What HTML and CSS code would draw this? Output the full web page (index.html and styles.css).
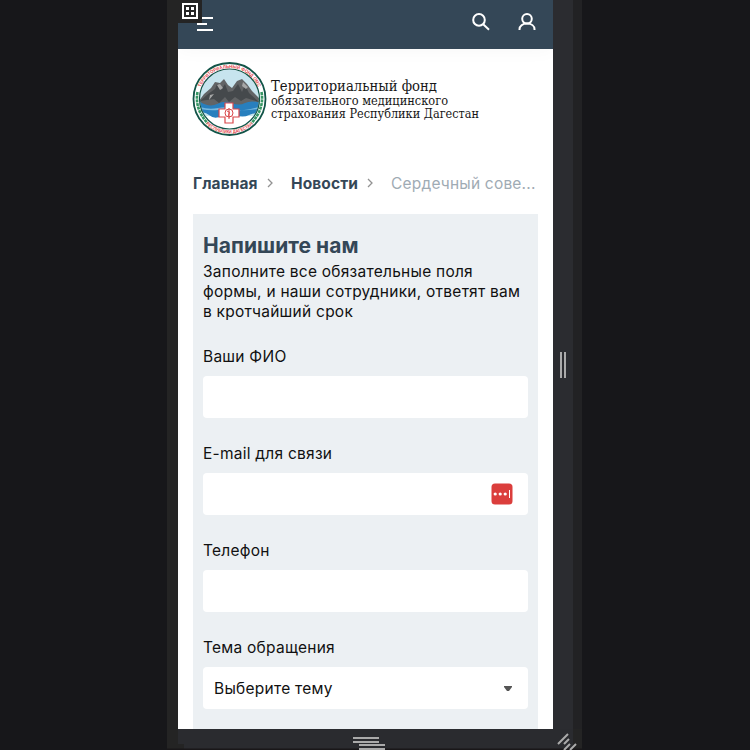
FILE: index.html
```
<!DOCTYPE html>
<html lang="ru">
<head>
<meta charset="utf-8">
<title>Напишите нам</title>
<link rel="stylesheet" href="styles.css">
</head>
<body>
<div class="workspace">
  <div class="rail-left"></div>
  <main class="device">
    <header class="topbar">
      <span class="burger"><i></i><i></i><i></i></span>
      <nav class="actions">
        <svg width="20" height="20" viewBox="0 0 20 20"><circle cx="8" cy="7.900" r="5.800"/><path d="M12.200 12.200 18 17.700"/></svg>
        <svg width="20" height="20" viewBox="0 0 20 20"><circle cx="10" cy="6.800" r="4.800"/><path d="M2.500 18v-.8c0-3.200 3-5.600 7.500-5.600s7.500 2.400 7.500 5.600v.8"/></svg>
      </nav>
    </header>
    <div class="brand">
      <svg width="290" height="78" viewBox="0 0 290 78">
        <defs>
          <clipPath id="scene"><circle cx="36.500" cy="38" r="29.500"/></clipPath>
          <path id="arcTop" d="M5.500 38a31 31 0 0 1 62 0"/>
          <path id="arcBottom" d="M2 38a34.500 34.500 0 0 0 69 0"/>
        </defs>
        <circle cx="36.500" cy="38" r="36" fill="#fff" stroke="#125448" stroke-width="1.800"/>
        <g clip-path="url(#scene)">
          <path fill="#c7e4ee" d="M5 5h64v66H5z"/>
          <path fill="#fff" d="M5 55h64v20H5z"/>
          <path fill="#287fbe" d="M5 40h64v13q-7-2-13 1t-14 0-14 1-12-1-11 0z"/>
          <path fill="#78b9df" d="M7 46q9 3 18 1t17 1 23-2v2q-13 2-23 1t-17 0-18-1z"/>
          <path fill="#626466" d="m6 40 5-7 7-6 4-6 5 1 4-4 4 6 4 3 5-7 5-2 5 5 5 7 9 9v3q-10-3-16 0t-13 0-15 1-18-3z"/>
          <path fill="#45494c" d="m7 40 8-7 7-5 2-5 4 6 4-6 3 8 5-1 5-7 4 8 3-7 4 8 10 9-13-4-5 3-6-4-6 5-4-5-6 6-5-4z"/>
          <path fill="#a6a7a7" d="m24 24 3-1 3 4-3 2zm26-3 5 5-2 2-4-3zM17 34l4-1-5 6z"/>
        </g>
        <circle cx="36.500" cy="38" r="30" fill="none" stroke="#125448" stroke-width="1.200"/>
        <g fill="none" stroke="#359663" stroke-width="2.600" stroke-dasharray="3 .7"><path d="M4.500 31q-3 17 10 31M68.500 31q3 17-10 31"/></g>
        <path fill="#fff" stroke="#d9474a" stroke-width="1.200" d="M32 42h8v6h6v8h-6v6h-8v-6h-6v-8h6z"/>
        <circle cx="36" cy="52" r="4" fill="#fff" stroke="#d9474a"/><path d="M36 47v11m-2-8q4 1 2 3t1 3" fill="none" stroke="#d9474a"/>
        <text class="seal"><textPath href="#arcTop" startOffset="12" textLength="73" lengthAdjust="spacingAndGlyphs">ТЕРРИТОРИАЛЬНЫЙ ФОНД ОМС</textPath></text>
        <text class="seal"><textPath href="#arcBottom" startOffset="28" textLength="52" lengthAdjust="spacingAndGlyphs">РЕСПУБЛИКИ ДАГЕСТАН</textPath></text>
        <g class="brand-name"><text x="78" y="30" font-size="14" textLength="166" lengthAdjust="spacingAndGlyphs">Территориальный фонд</text><text x="78" y="44" font-size="12" textLength="177" lengthAdjust="spacingAndGlyphs">обязательного медицинского</text><text x="78" y="57" font-size="12" textLength="208" lengthAdjust="spacingAndGlyphs">страхования Республики Дагестан</text></g>
      </svg>
    </div>
    <nav class="crumbs">
      <span class="crumb-home">Главная</span><svg width="6" height="10" viewBox="0 0 6 10"><path d="m1 1 4 4-4 4"/></svg>
      <span class="crumb-news">Новости</span><svg width="6" height="10" viewBox="0 0 6 10"><path d="m1 1 4 4-4 4"/></svg>
      <span class="crumb-current">Сердечный сове...</span>
    </nav>
    <form class="panel">
      <h1>Напишите нам</h1>
      <p>Заполните все обязательные поля<br>формы, и наши сотрудники, ответят вам<br>в кротчайший срок</p>
      <div class="field"><label>Ваши ФИО</label><div class="input"></div></div>
      <div class="field"><label>E-mail для связи</label><div class="input"><svg class="pass" width="22" height="22" viewBox="0 0 22 22"><rect x=".5" y=".5" width="21" height="21" rx="3.500" fill="#db3e3c"/><g fill="#fff"><circle cx="4.200" cy="11" r="1.600"/><circle cx="9.200" cy="11" r="1.600"/><circle cx="14.200" cy="11" r="1.600"/><path d="M18 7h1v8h-1z"/></g></svg></div></div>
      <div class="field"><label>Телефон</label><div class="input"></div></div>
      <div class="field"><label>Тема обращения</label><div class="input"><span class="choice">Выберите тему</span><svg width="8" height="5" viewBox="0 0 8 5"><path fill="#555" d="M0 0h8v1L5 5H3L0 1z"/></svg></div></div>
    </form>
  </main>
  <div class="rail-right"><span class="grip-side"></span></div>
  <div class="rail-edge"></div>
</div>
<div class="bottom-rail"><svg width="415" height="21" viewBox="0 0 415 21"><path fill="#242424" d="M0 0h11v15h6v6H0zM406 0h9v21h-9z"/><path fill="#191719" d="M0 19.500h415V21H0z"/><g fill="#aaa"><path d="M186 8h26v2h-26zM186 12h26v2h-26zM192 15h26v2h-26zM192 19h26v2h-26z"/></g><path d="m391 15 10-10m-4 10 5-5m-5 11 6-6m0 6 6-6" fill="none" stroke="#aaa" stroke-width="2"/></svg></div>
<div class="grid-button"><svg width="24" height="23" viewBox="0 0 24 23"><path fill="none" stroke="#fff" stroke-width="2" d="M5 4h14v14H5z"/><path fill="#fff" d="M8 7h3v3H8zm5 0h3v3h-3zm-5 5h3v3H8zm5 0h3v3h-3z"/></svg></div>
</body>
</html>
```
FILE: styles.css
```
* { box-sizing: border-box; }
body { margin: 0; width: 750px; height: 750px; overflow: hidden; background: #17171a; font: 15.5px/20px Inter, "Noto Sans", sans-serif; letter-spacing: .25px; color: #111; position: relative; }
svg { display: block; flex: none; letter-spacing: 0; }
.workspace { display: flex; height: 729px; margin-left: 167px; }
.rail-left { width: 11px; background: #242424; }
.device { width: 375px; height: 729px; background: #fff; overflow: hidden; }
.rail-right { width: 20px; background: #2b2c30; padding: 352px 0 0 7px; }
.grip-side { display: block; width: 6px; height: 26px; border: solid #aaa; border-width: 0 2px; }
.rail-edge { width: 9px; background: #222224; }
.bottom-rail { width: 415px; height: 21px; margin-left: 167px; background: #2a2b2f; }
.grid-button { position: absolute; left: 178px; top: 0; width: 24px; height: 23px; background: #242424; }
.topbar { height: 49px; background: #344757; display: flex; justify-content: space-between; padding: 12px 16px 0 19px; box-shadow: 0 0 20px rgba(0,0,0,.04); }
.burger { display: flex; flex-direction: column; gap: 4px; padding-top: 5px; }
.burger i { display: block; width: 16px; height: 2px; background: #fff; }
.burger i:nth-child(2) { width: 10px; }
.actions { display: flex; gap: 26px; }
.actions svg { fill: none; stroke: #fff; stroke-width: 2; }
.brand { height: 122px; padding: 12px 0 0 15px; }
.brand svg { overflow: visible; }
.brand-name { font-family: "DejaVu Serif", serif; fill: #171717; }
.seal { font: bold 4.8px "Liberation Sans", sans-serif; fill: #e4474b; }
.crumbs { height: 43px; padding: 3px 0 0 15px; display: flex; align-items: flex-start; color: #344757; white-space: nowrap; }
.crumbs svg { margin-top: 4px; fill: none; stroke: #929292; stroke-width: 1.3; }
.crumb-home, .crumb-news { font-weight: 700; letter-spacing: .1px; }
.crumb-home { width: 74px; }
.crumb-news { width: 76px; margin-left: 18px; }
.crumb-current { margin-left: 18px; color: #9fabb4; letter-spacing: .2px; }
.panel { width: 345px; height: 530px; margin-left: 15px; background: #ecf0f3; padding: 19px 10px 0; }
h1 { margin: 0; font-size: 21px; line-height: 25px; font-weight: 700; letter-spacing: .05px; color: #344757; white-space: nowrap; }
p { margin: 4px 0 25px; white-space: nowrap; }
.field { height: 97px; }
.field label { display: block; height: 20px; margin-bottom: 9px; white-space: nowrap; }
.input { height: 42px; background: #fff; border-radius: 4px; display: flex; align-items: center; justify-content: space-between; padding: 0 16px 0 11px; }
.choice { padding-top: 1px; }
.pass { margin: 0 -1px 0 auto; }
```
